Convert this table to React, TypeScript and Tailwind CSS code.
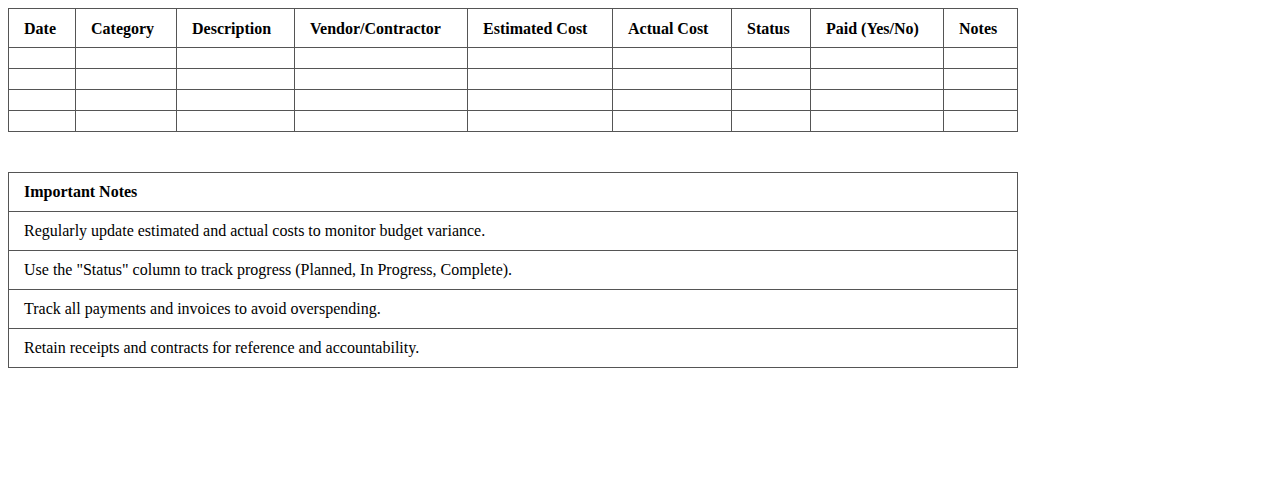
import React from 'react';

const columns = [
  { label: 'Date', width: 'w-[67px]' },
  { label: 'Category', width: 'w-[101px]' },
  { label: 'Description', width: 'w-[118px]' },
  { label: 'Vendor/Contractor', width: 'w-[173px]' },
  { label: 'Estimated Cost', width: 'w-[145px]' },
  { label: 'Actual Cost', width: 'w-[119px]' },
  { label: 'Status', width: 'w-[79px]' },
  { label: 'Paid (Yes/No)', width: 'w-[133px]' },
  { label: 'Notes', width: 'w-[74px]' },
];

const notes = [
  'Regularly update estimated and actual costs to monitor budget variance.',
  'Use the "Status" column to track progress (Planned, In Progress, Complete).',
  'Track all payments and invoices to avoid overspending.',
  'Retain receipts and contracts for reference and accountability.',
];

export default function App() {
  return (
    <div className="min-h-screen bg-white p-2 font-['Liberation_Serif',serif] text-base text-black">
      {/* Expense table */}
      <table className="w-[1010px] table-fixed border-collapse border border-[#555]">
        <thead>
          <tr>
            {columns.map((col) => (
              <th
                key={col.label}
                className={`${col.width} h-[39px] border border-[#555] px-[15px] pt-px text-left font-bold whitespace-nowrap`}
              >
                {col.label}
              </th>
            ))}
          </tr>
        </thead>
        <tbody>
          {[0, 1, 2, 3].map((row) => (
            <tr key={row}>
              {columns.map((col) => (
                <td key={col.label} className="h-[21px] border border-[#555] p-0"></td>
              ))}
            </tr>
          ))}
        </tbody>
      </table>

      {/* Important notes */}
      <div className="mt-[40px] w-[1010px] border border-[#555]">
        <div className="flex h-[38px] items-center px-[15px] font-bold">Important Notes</div>
        {notes.map((note) => (
          <div key={note} className="flex h-[39px] items-center border-t border-[#555] px-[15px]">
            {note}
          </div>
        ))}
      </div>
    </div>
  );
}
